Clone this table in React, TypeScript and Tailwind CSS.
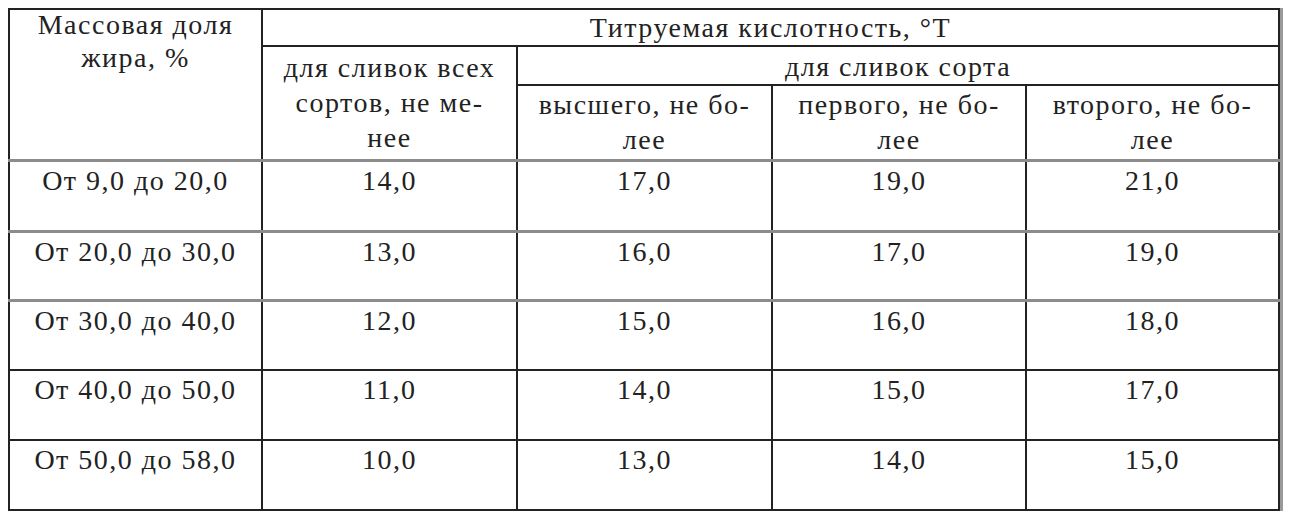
const rows = [
  ["От 9,0 до 20,0", "14,0", "17,0", "19,0", "21,0"],
  ["От 20,0 до 30,0", "13,0", "16,0", "17,0", "19,0"],
  ["От 30,0 до 40,0", "12,0", "15,0", "16,0", "18,0"],
  ["От 40,0 до 50,0", "11,0", "14,0", "15,0", "17,0"],
  ["От 50,0 до 58,0", "10,0", "13,0", "14,0", "15,0"],
];

const rowHeights = ["h-[71px]", "h-[69px]", "h-[70px]", "h-[70px]", "h-[70px]"];
const rowBorders = [
  "border-b-[3px] border-b-[#8c8c8c]",
  "border-b-[3px] border-b-[#8c8c8c]",
  "border-b-2 border-b-[#222]",
  "border-b-2 border-b-[#222]",
  "border-b-2 border-b-[#222]",
];

function Lines({ lines, className = "" }: { lines: string[]; className?: string }) {
  return (
    <div className={`text-center tracking-[1.5px] whitespace-nowrap ${className}`}>
      {lines.map((l) => (
        <div key={l}>{l}</div>
      ))}
    </div>
  );
}

const cell = "border-2 border-[#222] p-0 align-top";

export default function App() {
  return (
    <div className="min-h-screen bg-white pl-2 pt-2 font-['Liberation_Serif']">
      <div className="w-fit shadow-[3px_0_0_0_#9a9a9a]">
        <table className="table-fixed border-collapse text-[28px] leading-[35px] text-[#222]">
          <colgroup>
            <col className="w-[253px]" />
            <col className="w-[255px]" />
            <col className="w-[255px]" />
            <col className="w-[254px]" />
            <col className="w-[253px]" />
          </colgroup>
          <thead>
            <tr className="h-[35px]">
              <td rowSpan={3} className={`${cell} border-b-[3px] border-b-[#8c8c8c] leading-[33px]`}>
                <Lines lines={["Массовая доля", "жира, %"]} className="-mt-0.5" />
              </td>
              <td colSpan={4} className={cell}>
                <Lines lines={["Титруемая кислотность, °Т"]} />
              </td>
            </tr>
            <tr className="h-[36px]">
              <td rowSpan={2} className={`${cell} border-b-[3px] border-b-[#8c8c8c] pt-[3px]`}>
                <Lines lines={["для сливок всех", "сортов, не ме-", "нее"]} />
              </td>
              <td colSpan={3} className={`${cell} pt-0.5`}>
                <Lines lines={["для сливок сорта"]} />
              </td>
            </tr>
            <tr className="h-[75px]">
              {["высшего, не бо-", "первого, не бо-", "второго, не бо-"].map((t) => (
                <td key={t} className={`${cell} border-b-[3px] border-b-[#8c8c8c] pt-px`}>
                  <Lines lines={[t, "лее"]} />
                </td>
              ))}
            </tr>
          </thead>
          <tbody>
            {rows.map((r, i) => (
              <tr key={r[0]} className={rowHeights[i]}>
                {r.map((v, j) => (
                  <td key={j} className={`${cell} ${rowBorders[i]} pt-px`}>
                    <Lines lines={[v]} />
                  </td>
                ))}
              </tr>
            ))}
          </tbody>
        </table>
      </div>
    </div>
  );
}
